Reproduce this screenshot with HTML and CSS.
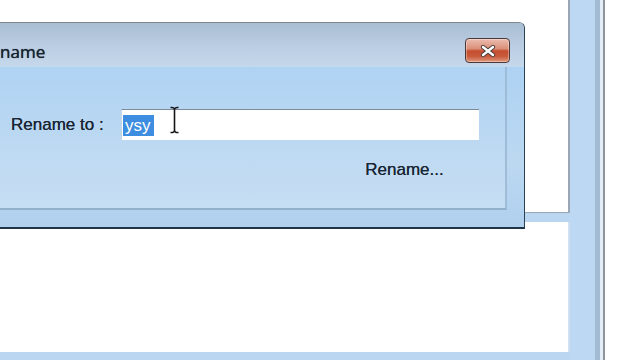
FILE: index.html
```html
<!DOCTYPE html>
<html>
<head>
<meta charset="utf-8">
<link rel="stylesheet" href="styles.css">
</head>
<body>
<div class="desktop">
  <div class="win">
    <div class="win-main">
      <div class="pane pane-top"></div>
      <div class="pane pane-bottom"></div>
    </div>
    <div class="win-frame"></div>
  </div>

  <div class="dialog">
    <div class="titlebar">
      <span class="title">Rename</span>
      <div class="close">
        <svg width="16" height="12" viewBox="0 0 16 12">
          <path d="M3 2 L13 10 M13 2 L3 10" stroke="#4a3a3a" stroke-width="4.2" stroke-linecap="round"/>
          <path d="M3 2 L13 10 M13 2 L3 10" stroke="#ffffff" stroke-width="2.4" stroke-linecap="round"/>
        </svg>
      </div>
    </div>
    <div class="body">
      <div class="client">
        <div class="row">
          <span class="label">Rename to :</span>
          <div class="input"><span class="sel">ysy</span>
            <svg class="ibeam" width="11" height="28" viewBox="0 0 11 28">
              <path d="M1.5 1.5 Q5.5 1 5.5 4 Q5.5 1 9.5 1.5 M5.5 4 V24 M1.5 26.5 Q5.5 27 5.5 24 Q5.5 27 9.5 26.5" stroke="#151515" stroke-width="1.6" fill="none"/>
            </svg>
          </div>
        </div>
        <div class="actions">
          <div class="btn">Rename...</div>
        </div>
      </div>
    </div>
  </div>
</div>
</body>
</html>
```
FILE: styles.css
```css
html, body {
  margin: 0;
  padding: 0;
  background: #ffffff;
}
.desktop {
  position: relative;
  width: 640px;
  height: 360px;
  overflow: hidden;
  background: #ffffff;
}
.win {
  display: flex;
  width: 605px;
  height: 360px;
}
.win-main {
  width: 570px;
  display: flex;
  flex-direction: column;
  gap: 9px;
  background: #bad6f1;
}
.pane {
  background: #ffffff;
  border-right: 2px solid #9ba7b5;
}
.pane-top {
  height: 212px;
  border-bottom: 1px solid #9ba7b5;
}
.pane-bottom {
  height: 130px;
  border-right-color: #cfe0f2;
}
.win-frame {
  width: 35px;
  background: linear-gradient(to right, #bcd8f2 0 25px, #a4bcd3 25px 30px, #e3edf7 30px 33px, #8e959d 33px 35px);
}

.dialog {
  position: absolute;
  left: -30px;
  top: 22px;
  width: 554px;
  height: 204px;
  border-top: 1px solid #7f8791;
  border-right: 1px solid #2b4252;
  border-bottom: 2px solid #1e3545;
  border-top-right-radius: 6px;
  display: flex;
  flex-direction: column;
  background: #b5d5f1;
  overflow: hidden;
}
.titlebar {
  height: 44px;
  display: flex;
  justify-content: space-between;
  align-items: flex-start;
  padding: 0 14px 0 10px;
  background: linear-gradient(#a9bdd3, #b8cbe0 45%, #c6d8ec);
}
.title {
  align-self: center;
  margin-top: 13px;
  font-family: "Open Sans", "Noto Sans", sans-serif;
  font-size: 17px;
  color: #18222f;
  text-shadow: 0 0 0.7px #18222f;
}
.close {
  margin-top: 15px;
  width: 43px;
  height: 23px;
  border: 1px solid #4d3838;
  border-radius: 4px;
  display: flex;
  align-items: center;
  justify-content: center;
  background: linear-gradient(#ecbcae, #db907a 42%, #c64d30 52%, #c85a3c 75%, #e19a7c);
  box-shadow: inset 0 0 0 1px rgba(255,255,255,0.35);
}
.body {
  flex: 1;
  padding: 0 17px 17px 0;
  background: linear-gradient(#aed2f3, #bcd8f1 60%, #b0d0ee);
  display: flex;
}
.client {
  flex: 1;
  border-right: 2px solid #9ebcd8;
  border-bottom: 2px solid #93b0ca;
  background: linear-gradient(#afd3f3, #bed9f2 60%, #c6def3);
  padding: 42px 25px 0 40px;
  font-family: "Liberation Sans", Arial, sans-serif;
  font-size: 17px;
  color: #1a2634;
  text-shadow: 0 0 0.6px #1a2634;
}
.row {
  display: flex;
  align-items: center;
  gap: 15px;
}
.label {
  width: 95px;
  padding-left: 1px;
  white-space: nowrap;
}
.input {
  position: relative;
  width: 356px;
  height: 30px;
  background: #ffffff;
  border-top: 1px solid #7d8c9c;
  border-left: 1px solid #c9d6e2;
  display: flex;
  align-items: center;
  padding-left: 1px;
}
.sel {
  background: #3d8ee0;
  color: #ffffff;
  text-shadow: none;
  line-height: 21px;
  padding: 0 3px 0 2px;
}
.ibeam {
  position: absolute;
  left: 47px;
  top: -4px;
}
.actions {
  display: flex;
  justify-content: flex-end;
  padding-right: 8px;
  margin-top: 15px;
}
.btn {
  width: 135px;
  height: 30px;
  line-height: 30px;
  text-align: center;
}
```
